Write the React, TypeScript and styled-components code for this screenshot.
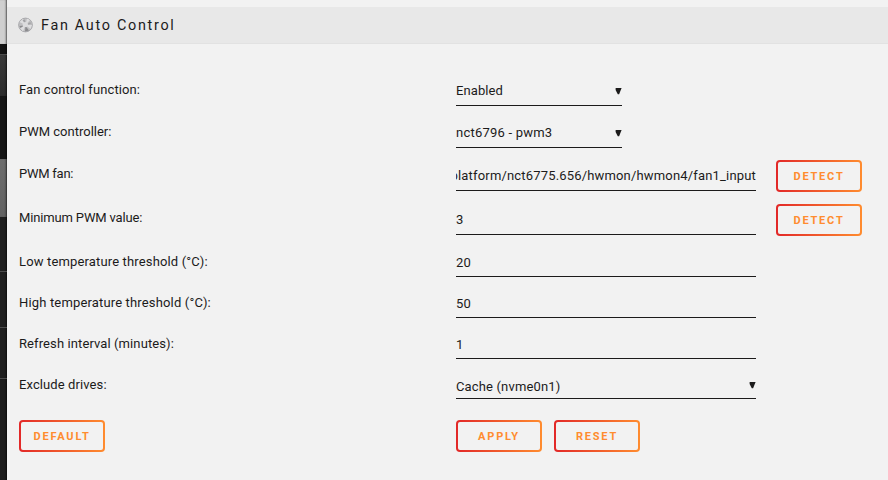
import * as React from "react";
import styled, { createGlobalStyle } from "styled-components";

const ENCRE = "#1c1b1b";
const FOND = "#f2f2f2";
const ORANGE = "#ff8c2f";
const ROUGE = "#e22828";

const GlobalStyle = createGlobalStyle`
    html, body {
        margin: 0;
        background: ${FOND};
        overflow: hidden;
    }
    * {
        box-sizing: border-box;
    }
`;

const Page = styled.div`
    display: flex;
    width: 888px;
    height: 480px;
    background: ${FOND};
    color: ${ENCRE};
    font-family: Roboto, "Noto Sans", sans-serif;
    font-size: 13px;
`;

const Backdrop = styled.div`
    flex: none;
    width: 7px;
    display: flex;
    flex-direction: column;
`;

interface BandProps {
    $height: number;
    $fill: string;
    $line?: boolean;
}

const Band = styled.div<BandProps>`
    flex: none;
    height: ${(props) => props.$height}px;
    background: ${(props) => props.$fill};
    border-top: ${(props) => (props.$line ? "1px solid #4c4c4c" : "none")};
    box-shadow: inset -2px 0 2px -1px rgba(0, 0, 0, 0.6);
`;

const Content = styled.main`
    flex: 1;
    padding-top: 7px;
`;

const Title = styled.header`
    display: flex;
    align-items: center;
    height: 37px;
    padding: 1px 0 0 11px;
    background: #e8e8e8;
    border-bottom: 1px solid #e2e2e2;
    font-size: 14.4px;
    letter-spacing: 1.7px;
    white-space: pre;

    svg {
        flex: none;
        margin: 0 8px 1px 0;
    }
`;

const Form = styled.form`
    padding: 25px 0 0 12px;
`;

const Row = styled.div<{ $height: number }>`
    display: flex;
    align-items: flex-start;
    height: ${(props) => props.$height}px;
`;

const Label = styled.div<{ $spacing: number }>`
    flex: none;
    width: 437px;
    padding-top: 11px;
    line-height: 20px;
    letter-spacing: ${(props) => props.$spacing}px;
    white-space: nowrap;
`;

interface FieldProps {
    $width: number;
    $line: number;
    $top: number;
    $spacing: number;
    $end?: boolean;
}

const Field = styled.div<FieldProps>`
    flex: none;
    display: flex;
    justify-content: ${(props) => (props.$end ? "flex-end" : "space-between")};
    width: ${(props) => props.$width}px;
    height: ${(props) => props.$line + 1}px;
    padding-top: ${(props) => props.$top}px;
    border-bottom: 1px solid ${ENCRE};
    line-height: 20px;
    letter-spacing: ${(props) => props.$spacing}px;
    white-space: nowrap;
    overflow: hidden;
`;

const Arrow = styled.svg<{ $top: number }>`
    flex: none;
    margin-top: ${(props) => props.$top}px;
`;

const Button = styled.button`
    flex: none;
    width: 86px;
    height: 32px;
    padding: 0;
    border: 2px solid transparent;
    border-radius: 4px;
    background:
        linear-gradient(${FOND}, ${FOND}) padding-box,
        linear-gradient(90deg, ${ROUGE}, ${ORANGE}) border-box;
    color: ${ORANGE};
    font: bold 11px Roboto, "Noto Sans", sans-serif;
    letter-spacing: 1.8px;
    text-transform: uppercase;
`;

const Detect = styled(Button)`
    margin: 7px 0 0 20px;
`;

const Actions = styled.div`
    display: flex;
    padding-top: 15px;
`;

const ActionCell = styled.div`
    display: flex;
    gap: 12px;
    width: 437px;
`;

const FanIcon = () => (
    <svg width="15" height="16" viewBox="0 0 15 16">
        <circle cx="7.5" cy="8" r="6.9" fill="#c0c0c2" stroke="#a0a0a3" strokeWidth="0.8" />
        <path d="M7.5 8 1.5 5 5 1.8z M7.5 8 9 1.4 12 3z M7.5 8 14 8 12.5 12z M7.5 8 5 14.4 2 11z" fill="#dedee0" />
        <path d="M7.5 8 4.5 3 7 2.4z M7.5 8 12.4 5 12.8 7z" fill="#a2a2a5" />
        <path d="M7.5 9 11 13.6 7 14.6z M6 8.5 1.4 9 2.6 11z" fill="#8a8a8d" />
        <circle cx="7.3" cy="7.5" r="2.6" fill="#dcdcde" />
    </svg>
);

interface FieldRow {
    label: string;
    labelSpacing: number;
    value: string;
    valueSpacing: number;
    height: number;
    line: number;
    top: number;
    width: number;
    arrowTop?: number;
    detect?: boolean;
    end?: boolean;
}

const rows: FieldRow[] = [
    { label: "Fan control function:", labelSpacing: 0.1, value: "Enabled", valueSpacing: 0.1, height: 42, line: 36, top: 12, width: 166, arrowTop: 7 },
    { label: "PWM controller:", labelSpacing: 0, value: "nct6796 - pwm3", valueSpacing: 0.22, height: 42, line: 36, top: 12, width: 166, arrowTop: 7 },
    { label: "PWM fan:", labelSpacing: -0.25, value: "/sys/devices/platform/nct6775.656/hwmon/hwmon4/fan1_input", valueSpacing: 0.17, height: 44, line: 37, top: 13, width: 300, detect: true, end: true },
    { label: "Minimum PWM value:", labelSpacing: -0.15, value: "3", valueSpacing: 0, height: 44, line: 37, top: 13, width: 300, detect: true },
    { label: "Low temperature threshold (°C):", labelSpacing: 0.15, value: "20", valueSpacing: 0.1, height: 41, line: 35, top: 12, width: 300 },
    { label: "High temperature threshold (°C):", labelSpacing: 0.16, value: "50", valueSpacing: 0.1, height: 41, line: 35, top: 12, width: 300 },
    { label: "Refresh interval (minutes):", labelSpacing: 0.1, value: "1", valueSpacing: 0, height: 41, line: 35, top: 12, width: 300 },
    { label: "Exclude drives:", labelSpacing: 0.1, value: "Cache (nvme0n1)", valueSpacing: 0.15, height: 41, line: 34, top: 13, width: 300, arrowTop: 5 }
];

export default function App() {
    return (
        <Page>
            <GlobalStyle />
            <Backdrop>
                <Band $height={44} $fill="#cfcfcf" />
                <Band $height={10} $fill="#131313" />
                <Band $height={42} $fill="linear-gradient(#393939, #2b2b2b)" $line />
                <Band $height={63} $fill="#151515" />
                <Band $height={58} $fill="linear-gradient(#6d6d6d, #626262)" />
                <Band $height={54} $fill="#1f1f1f" />
                <Band $height={56} $fill="#1f1f1f" $line />
                <Band $height={51} $fill="#1f1f1f" $line />
                <Band $height={102} $fill="#1c1c1c" $line />
            </Backdrop>
            <Content>
                <Title>
                    <FanIcon />
                    Fan Auto Control
                </Title>
                <Form>
                    {rows.map((r) => (
                        <Row key={r.label} $height={r.height}>
                            <Label $spacing={r.labelSpacing}>{r.label}</Label>
                            <Field $width={r.width} $line={r.line} $top={r.top} $spacing={r.valueSpacing} $end={r.end}>
                                <span>{r.value}</span>
                                {r.arrowTop !== undefined && (
                                    <Arrow $top={r.arrowTop} width="7" height="7" viewBox="0 0 7 7">
                                        <path d="M0.6 0H6.6L4.1 6.2H2.8L0.6 2z" fill={ENCRE} />
                                    </Arrow>
                                )}
                            </Field>
                            {r.detect && <Detect type="button">Detect</Detect>}
                        </Row>
                    ))}
                    <Actions>
                        <ActionCell>
                            <Button type="button">Default</Button>
                        </ActionCell>
                        <ActionCell>
                            <Button type="button">Apply</Button>
                            <Button type="button">Reset</Button>
                        </ActionCell>
                    </Actions>
                </Form>
            </Content>
        </Page>
    );
}
